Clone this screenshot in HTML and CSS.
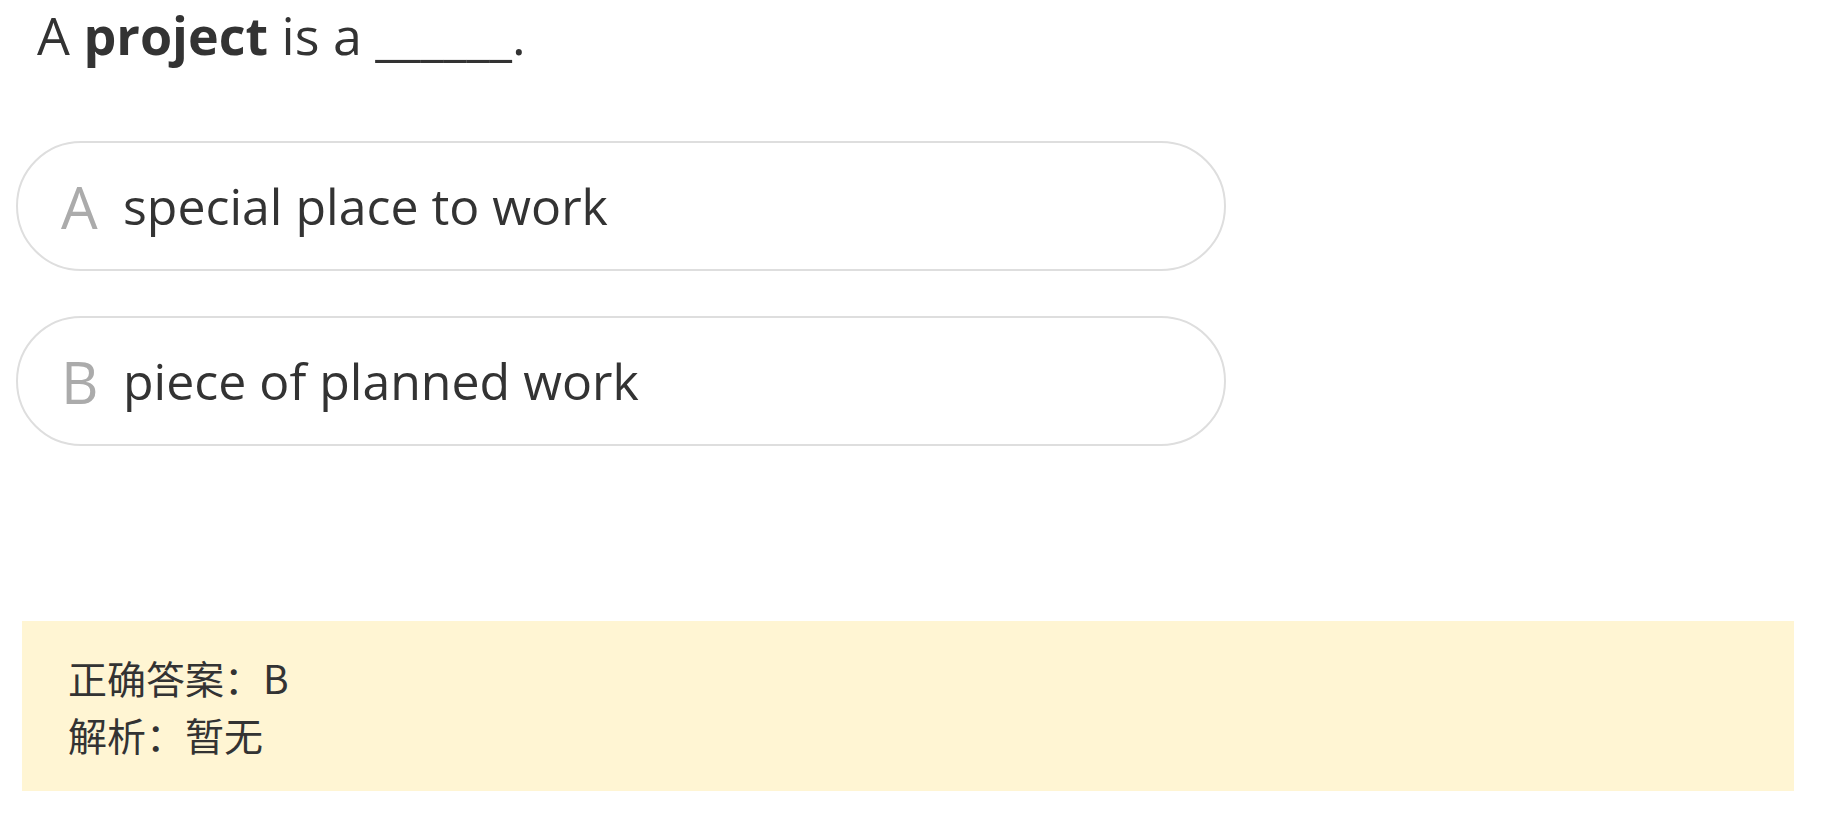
FILE: index.html
```html
<!DOCTYPE html>
<html lang="zh-CN">
<head>
<meta charset="utf-8">
<title>Question</title>
<link rel="stylesheet" href="styles.css">
</head>
<body>
<div class="page">
  <div class="question">A <b>project</b> is a ______.</div>
  <div class="options">
    <div class="option"><span class="label">A</span><span class="text">special place to work</span></div>
    <div class="option"><span class="label">B</span><span class="text">piece of planned work</span></div>
  </div>
  <div class="answer">
    <div class="line">正确答案：B</div>
    <div class="line">解析：暂无</div>
  </div>
</div>
</body>
</html>
```
FILE: styles.css
```css
html, body {
  margin: 0;
  padding: 0;
  background: #ffffff;
}
.page {
  font-family: "Open Sans", "Noto Sans CJK SC", sans-serif;
  color: #333333;
  display: flex;
  flex-direction: column;
}
.question {
  font-size: 52px;
  line-height: 70px;
  padding-left: 37px;
}
.question b {
  font-weight: 700;
}
.options {
  display: flex;
  flex-direction: column;
  gap: 45px;
  margin-top: 71px;
  width: 1210px;
  margin-left: 16px;
}
.option {
  height: 126px;
  border: 2px solid #dedede;
  border-radius: 65px;
  display: flex;
  align-items: center;
  padding-left: 43px;
}
.label {
  font-size: 58px;
  color: #ababab;
  width: 62px;
}
.text {
  font-size: 50px;
}
.answer {
  margin: 175px 28px 0 22px;
  background: #fff5d3;
  padding: 28px 46px;
  font-family: "Noto Sans CJK SC", sans-serif;
  font-size: 39px;
  line-height: 57px;
  color: #333333;
}
```
